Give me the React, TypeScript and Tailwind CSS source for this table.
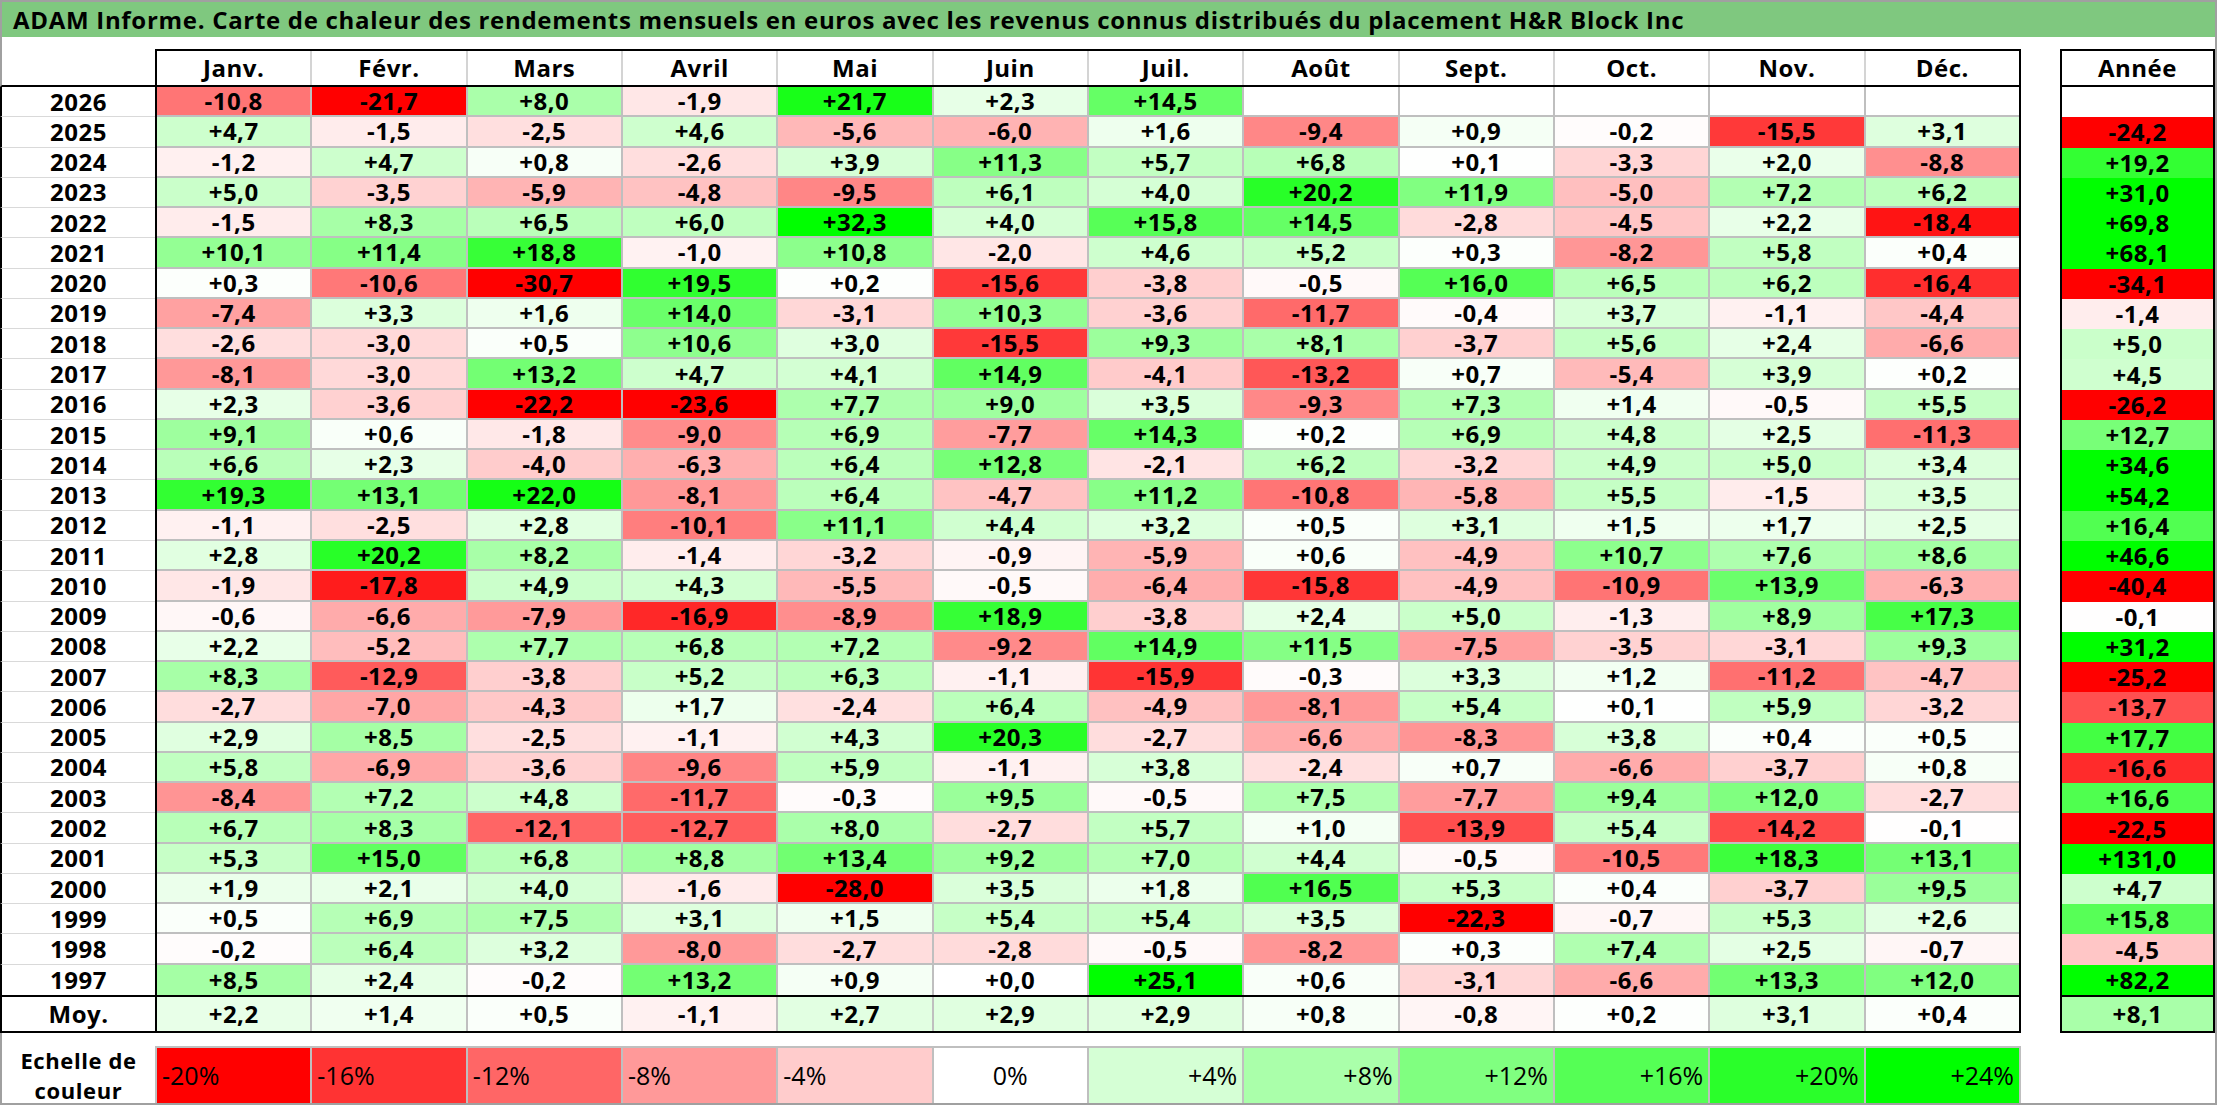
import React from 'react'

const MONTHS = ['Janv.', 'Févr.', 'Mars', 'Avril', 'Mai', 'Juin', 'Juil.', 'Août', 'Sept.', 'Oct.', 'Nov.', 'Déc.']

// year | 12 months | année
const ROWS: [string, string][] = [
  ['2026', '-10,8 -21,7 +8,0 -1,9 +21,7 +2,3 +14,5 . . . . . | .'],
  ['2025', '+4,7 -1,5 -2,5 +4,6 -5,6 -6,0 +1,6 -9,4 +0,9 -0,2 -15,5 +3,1 | -24,2'],
  ['2024', '-1,2 +4,7 +0,8 -2,6 +3,9 +11,3 +5,7 +6,8 +0,1 -3,3 +2,0 -8,8 | +19,2'],
  ['2023', '+5,0 -3,5 -5,9 -4,8 -9,5 +6,1 +4,0 +20,2 +11,9 -5,0 +7,2 +6,2 | +31,0'],
  ['2022', '-1,5 +8,3 +6,5 +6,0 +32,3 +4,0 +15,8 +14,5 -2,8 -4,5 +2,2 -18,4 | +69,8'],
  ['2021', '+10,1 +11,4 +18,8 -1,0 +10,8 -2,0 +4,6 +5,2 +0,3 -8,2 +5,8 +0,4 | +68,1'],
  ['2020', '+0,3 -10,6 -30,7 +19,5 +0,2 -15,6 -3,8 -0,5 +16,0 +6,5 +6,2 -16,4 | -34,1'],
  ['2019', '-7,4 +3,3 +1,6 +14,0 -3,1 +10,3 -3,6 -11,7 -0,4 +3,7 -1,1 -4,4 | -1,4'],
  ['2018', '-2,6 -3,0 +0,5 +10,6 +3,0 -15,5 +9,3 +8,1 -3,7 +5,6 +2,4 -6,6 | +5,0'],
  ['2017', '-8,1 -3,0 +13,2 +4,7 +4,1 +14,9 -4,1 -13,2 +0,7 -5,4 +3,9 +0,2 | +4,5'],
  ['2016', '+2,3 -3,6 -22,2 -23,6 +7,7 +9,0 +3,5 -9,3 +7,3 +1,4 -0,5 +5,5 | -26,2'],
  ['2015', '+9,1 +0,6 -1,8 -9,0 +6,9 -7,7 +14,3 +0,2 +6,9 +4,8 +2,5 -11,3 | +12,7'],
  ['2014', '+6,6 +2,3 -4,0 -6,3 +6,4 +12,8 -2,1 +6,2 -3,2 +4,9 +5,0 +3,4 | +34,6'],
  ['2013', '+19,3 +13,1 +22,0 -8,1 +6,4 -4,7 +11,2 -10,8 -5,8 +5,5 -1,5 +3,5 | +54,2'],
  ['2012', '-1,1 -2,5 +2,8 -10,1 +11,1 +4,4 +3,2 +0,5 +3,1 +1,5 +1,7 +2,5 | +16,4'],
  ['2011', '+2,8 +20,2 +8,2 -1,4 -3,2 -0,9 -5,9 +0,6 -4,9 +10,7 +7,6 +8,6 | +46,6'],
  ['2010', '-1,9 -17,8 +4,9 +4,3 -5,5 -0,5 -6,4 -15,8 -4,9 -10,9 +13,9 -6,3 | -40,4'],
  ['2009', '-0,6 -6,6 -7,9 -16,9 -8,9 +18,9 -3,8 +2,4 +5,0 -1,3 +8,9 +17,3 | -0,1'],
  ['2008', '+2,2 -5,2 +7,7 +6,8 +7,2 -9,2 +14,9 +11,5 -7,5 -3,5 -3,1 +9,3 | +31,2'],
  ['2007', '+8,3 -12,9 -3,8 +5,2 +6,3 -1,1 -15,9 -0,3 +3,3 +1,2 -11,2 -4,7 | -25,2'],
  ['2006', '-2,7 -7,0 -4,3 +1,7 -2,4 +6,4 -4,9 -8,1 +5,4 +0,1 +5,9 -3,2 | -13,7'],
  ['2005', '+2,9 +8,5 -2,5 -1,1 +4,3 +20,3 -2,7 -6,6 -8,3 +3,8 +0,4 +0,5 | +17,7'],
  ['2004', '+5,8 -6,9 -3,6 -9,6 +5,9 -1,1 +3,8 -2,4 +0,7 -6,6 -3,7 +0,8 | -16,6'],
  ['2003', '-8,4 +7,2 +4,8 -11,7 -0,3 +9,5 -0,5 +7,5 -7,7 +9,4 +12,0 -2,7 | +16,6'],
  ['2002', '+6,7 +8,3 -12,1 -12,7 +8,0 -2,7 +5,7 +1,0 -13,9 +5,4 -14,2 -0,1 | -22,5'],
  ['2001', '+5,3 +15,0 +6,8 +8,8 +13,4 +9,2 +7,0 +4,4 -0,5 -10,5 +18,3 +13,1 | +131,0'],
  ['2000', '+1,9 +2,1 +4,0 -1,6 -28,0 +3,5 +1,8 +16,5 +5,3 +0,4 -3,7 +9,5 | +4,7'],
  ['1999', '+0,5 +6,9 +7,5 +3,1 +1,5 +5,4 +5,4 +3,5 -22,3 -0,7 +5,3 +2,6 | +15,8'],
  ['1998', '-0,2 +6,4 +3,2 -8,0 -2,7 -2,8 -0,5 -8,2 +0,3 +7,4 +2,5 -0,7 | -4,5'],
  ['1997', '+8,5 +2,4 -0,2 +13,2 +0,9 +0,0 +25,1 +0,6 -3,1 -6,6 +13,3 +12,0 | +82,2'],
]
const AVG = '+2,2 +1,4 +0,5 -1,1 +2,7 +2,9 +2,9 +0,8 -0,8 +0,2 +3,1 +0,4 | +8,1'

const SCALE = [-20, -16, -12, -8, -4, 0, 4, 8, 12, 16, 20, 24]

function parse(line: string) {
  const [m, y] = line.split(' | ')
  const months = m.split(' ').map((s) => (s === '.' ? '' : s))
  return { months, year: y === '.' ? '' : y }
}

function heat(text: string | number) {
  if (text === '') return '#ffffff'
  const v = typeof text === 'number' ? text : parseFloat(text.replace(',', '.'))
  if (v >= 0) {
    const c = Math.round(255 * (1 - Math.min(v / 24, 1)))
    return `rgb(${c},255,${c})`
  }
  const c = Math.round(255 * (1 - Math.min(-v / 20, 1)))
  return `rgb(255,${c},${c})`
}

function MonthCells({ values, last }: { values: string[]; last?: boolean }) {
  return (
    <div className="flex flex-1 border-x-2 border-black">
      {values.map((v, i) => (
        <div
          key={i}
          className={`flex flex-1 items-center justify-center border-[#bfbfbf] ${i < 11 ? 'border-r-2' : ''} ${last ? '' : 'border-b-2'}`}
          style={{ backgroundColor: heat(v) }}
        >
          {v}
        </div>
      ))}
    </div>
  )
}

export default function App() {
  const rows = ROWS.map(([y, line]) => ({ label: y, ...parse(line) }))
  const avg = parse(AVG)

  return (
    <div className="h-[1105px] w-[2217px] overflow-hidden border-y-2 border-r-2 border-[#a0a0a0] bg-white font-['Open_Sans',sans-serif] text-[24px] font-bold leading-none tracking-[0.5px] text-black">
      {/* Title */}
      <div className="flex h-[35px] items-center whitespace-nowrap border-l-2 border-[#a0a0a0] bg-[#7fc87f] pl-[11px] tracking-[0.7px]">
        ADAM Informe. Carte de chaleur des rendements mensuels en euros avec les revenus connus distribués du placement H&amp;R Block Inc
      </div>
      <div className="h-[12px] border-l-2 border-[#a0a0a0]" />

      <div className="flex">
        {/* Monthly table */}
        <div className="flex w-[2021px] flex-col">
          <div className="flex h-[38px]">
            <div className="w-[155px] border-b-2 border-l-2 border-b-black border-l-[#a0a0a0]" />
            <div className="flex flex-1 border-2 border-black">
              {MONTHS.map((m, i) => (
                <div
                  key={m}
                  className={`flex flex-1 items-center justify-center border-[#d4d4d4] ${i < 11 ? 'border-r-2' : ''}`}
                >
                  {m}
                </div>
              ))}
            </div>
          </div>
          <div className="flex h-[908px] flex-col">
            {rows.map((r, i) => (
              <div key={r.label} className="flex flex-1">
                <div
                  className={`flex w-[155px] items-center justify-center border-l-2 border-l-black border-b-[#d9d9d9] ${i < rows.length - 1 ? 'border-b' : ''}`}
                >
                  {r.label}
                </div>
                <MonthCells values={r.months} last={i === rows.length - 1} />
              </div>
            ))}
          </div>
          <div className="flex h-[38px] border-y-2 border-black">
            <div className="flex w-[155px] items-center justify-center border-l-2 border-black">Moy.</div>
            <MonthCells values={avg.months} last />
          </div>
        </div>

        <div className="w-[39px]" />

        {/* Yearly column */}
        <div className="flex w-[155px] flex-col">
          <div className="flex h-[38px] items-center justify-center border-2 border-black">Année</div>
          <div className="flex h-[908px] flex-col border-x-2 border-black">
            {rows.map((r) => (
              <div
                key={r.label}
                className="flex flex-1 items-center justify-center"
                style={{ backgroundColor: heat(r.year) }}
              >
                {r.year}
              </div>
            ))}
          </div>
          <div
            className="flex h-[38px] items-center justify-center border-2 border-black"
            style={{ backgroundColor: heat(avg.year) }}
          >
            {avg.year}
          </div>
        </div>
      </div>

      <div className="h-[13px] border-l-2 border-[#a0a0a0]" />

      {/* Colour scale */}
      <div className="flex h-[57px]">
        <div className="flex w-[155px] items-center justify-center border-l-2 border-[#a0a0a0] text-center text-[22px] leading-[30px] tracking-[0.6px]">
          <p>
            Echelle de
            <br />
            couleur
          </p>
        </div>
        <div className="flex w-[1866px] border-t-2 border-l-2 border-[#bfbfbf]">
          {SCALE.map((s, i) => (
            <div
              key={s}
              className={`flex flex-1 items-center border-r-2 border-[#bfbfbf] px-[5px] text-[25px] font-normal tracking-normal ${
                s < 0 ? 'justify-start' : s === 0 ? 'justify-center' : 'justify-end'
              } ${i === 11 ? 'border-r-0' : ''}`}
              style={{ backgroundColor: heat(s) }}
            >
              {s > 0 ? `+${s}%` : `${s}%`}
            </div>
          ))}
        </div>
      </div>
    </div>
  )
}
